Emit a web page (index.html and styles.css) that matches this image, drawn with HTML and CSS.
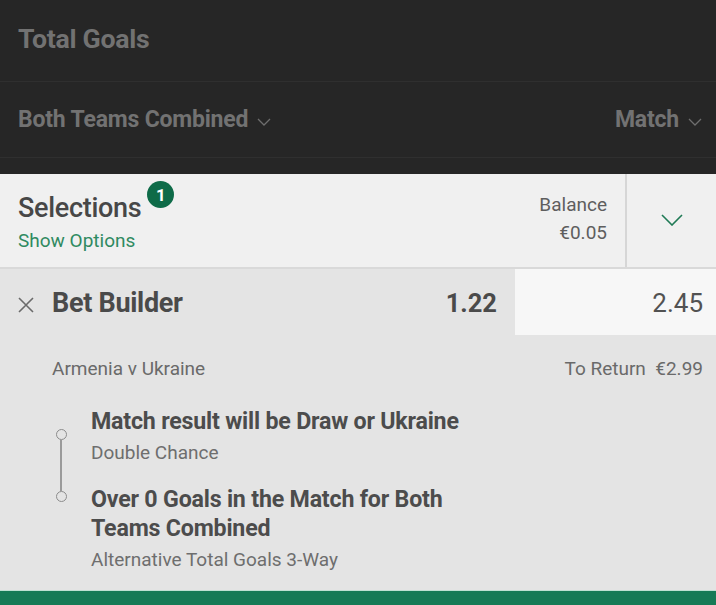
FILE: index.html
```html
<!DOCTYPE html>
<html>
<head>
<meta charset="utf-8">
<link rel="stylesheet" href="styles.css">
</head>
<body>
<div class="dark">
  <div class="row-title"><span class="title">Total Goals</span></div>
  <div class="row-filters">
    <span class="filter">Both Teams Combined <svg class="chev" viewBox="0 0 14 8" width="14" height="8"><path d="M1 1l6 6 6-6" fill="none" stroke="#6e6e6e" stroke-width="1.3"/></svg></span>
    <span class="filter">Match <svg class="chev" viewBox="0 0 14 8" width="14" height="8"><path d="M1 1l6 6 6-6" fill="none" stroke="#6e6e6e" stroke-width="1.3"/></svg></span>
  </div>
  <div class="strip"></div>
</div>
<div class="selections">
  <div class="sel-left">
    <div class="sel-head"><span class="sel-title">Selections</span><span class="badge">1</span></div>
    <div class="show-opt">Show Options</div>
  </div>
  <div class="balance">
    <div>Balance</div>
    <div>€0.05</div>
  </div>
  <div class="toggle">
    <svg viewBox="0 0 22 12" width="22" height="12"><path d="M1 1l10 10 10-10" fill="none" stroke="#1f7a55" stroke-width="1.6"/></svg>
  </div>
</div>
<div class="bet">
  <div class="bet-top">
    <div class="bet-main">
      <svg class="close" viewBox="0 0 16 16" width="16" height="16"><path d="M1 1l14 14M15 1L1 15" stroke="#6b6b6b" stroke-width="1.6"/></svg>
      <span class="bet-name">Bet Builder</span>
      <span class="odds">1.22</span>
    </div>
    <div class="stake">2.45</div>
  </div>
  <div class="event-row">
    <span>Armenia v Ukraine</span>
    <span>To Return&nbsp; €2.99</span>
  </div>
  <div class="legs">
    <div class="rail">
      <span class="dot"></span>
      <span class="line"></span>
      <span class="dot"></span>
    </div>
    <div class="leg-list">
      <div class="leg">
        <div class="leg-title">Match result will be Draw or Ukraine</div>
        <div class="leg-sub">Double Chance</div>
      </div>
      <div class="leg leg2">
        <div class="leg-title">Over 0 Goals in the Match for Both<br>Teams Combined</div>
        <div class="leg-sub">Alternative Total Goals 3-Way</div>
      </div>
    </div>
  </div>
</div>
<div class="green"></div>
</body>
</html>
```
FILE: styles.css
```css
* { box-sizing: border-box; }
html, body { margin: 0; padding: 0; }
body {
  width: 716px;
  height: 605px;
  overflow: hidden;
  font-family: Roboto, "Liberation Sans", sans-serif;
  background: #e4e4e4;
}
.dark { background: #262626; }
.row-title {
  height: 82px;
  border-bottom: 1px solid #2f2f2f;
  display: flex;
  align-items: center;
  padding: 0 18px 4px;
}
.title {
  font-size: 26.7px;
  font-weight: 700;
  color: #727272;
  letter-spacing: -0.3px;
}
.row-filters {
  height: 76px;
  border-bottom: 1px solid #2f2f2f;
  display: flex;
  justify-content: space-between;
  align-items: center;
  padding: 0 14px 0 18px;
}
.filter {
  font-size: 23px;
  font-weight: 700;
  color: #727272;
  letter-spacing: -0.2px;
  display: flex;
  align-items: center;
  gap: 9px;
}
.chev { margin-top: 5px; }
.strip { height: 16px; }
.selections {
  height: 95px;
  background: #f0f0f0;
  border-bottom: 2px solid #d9d9d9;
  display: flex;
}
.sel-left {
  flex: 1;
  padding: 18px 0 0 18px;
}
.sel-head { display: flex; align-items: flex-start; height: 33px; }
.sel-title {
  font-size: 27px;
  font-weight: 500;
  color: #474747;
  letter-spacing: -0.3px;
  line-height: 33px;
}
.badge {
  width: 27px;
  height: 27px;
  border-radius: 50%;
  background: #0e6b48;
  color: #fff;
  font-size: 17px;
  font-weight: 700;
  display: flex;
  align-items: center;
  justify-content: center;
  margin-left: 6px;
  margin-top: -11px;
}
.show-opt {
  margin-top: 6px;
  font-size: 19px;
  line-height: 20px;
  color: #2f8a61;
}
.balance {
  flex: 0 0 auto;
  padding: 17px 18px 0 0;
  text-align: right;
  font-size: 19px;
  color: #5e5e5e;
  line-height: 28px;
}
.toggle {
  width: 91px;
  border-left: 2px solid #d6d6d6;
  display: flex;
  align-items: center;
  justify-content: center;
  padding-bottom: 2px;
}
.bet { background: #e4e4e4; }
.bet-top { display: flex; height: 66px; }
.bet-main {
  flex: 1;
  display: flex;
  align-items: center;
  padding: 1px 18px 0 18px;
}
.close { margin-right: 18px; margin-top: 4px; }
.bet-name {
  flex: 1;
  font-size: 27px;
  font-weight: 700;
  color: #4a4a4a;
  letter-spacing: -0.3px;
}
.odds {
  font-size: 25.5px;
  font-weight: 700;
  color: #4a4a4a;
}
.stake {
  width: 201px;
  background: #f7f7f7;
  display: flex;
  align-items: center;
  justify-content: flex-end;
  padding: 1px 13px 0 0;
  font-size: 26px;
  color: #525252;
}
.event-row {
  display: flex;
  justify-content: space-between;
  padding: 22px 13px 0 52px;
  font-size: 19px;
  line-height: 24px;
  color: #6a6a6a;
}
.legs {
  display: flex;
  padding: 26px 0 0 55px;
}
.rail {
  width: 12px;
  display: flex;
  flex-direction: column;
  align-items: center;
  padding-top: 22px;
  margin-right: 24px;
}
.dot {
  width: 11px;
  height: 11px;
  border: 1.5px solid #8c8c8c;
  border-radius: 50%;
  flex: 0 0 auto;
}
.line {
  width: 1.5px;
  height: 51px;
  background: #9a9a9a;
}
.leg-title {
  font-size: 23.2px;
  font-weight: 700;
  color: #4c4c4c;
  line-height: 29px;
  letter-spacing: -0.2px;
}
.leg-sub {
  font-size: 19px;
  line-height: 24px;
  color: #6e6e6e;
  margin-top: 5px;
}
.leg2 { margin-top: 20px; }
.green {
  position: absolute;
  left: 0;
  top: 590px;
  width: 716px;
  height: 15px;
  background: #167a56;
  border-top: 1px solid #bfe0d2;
}
```
